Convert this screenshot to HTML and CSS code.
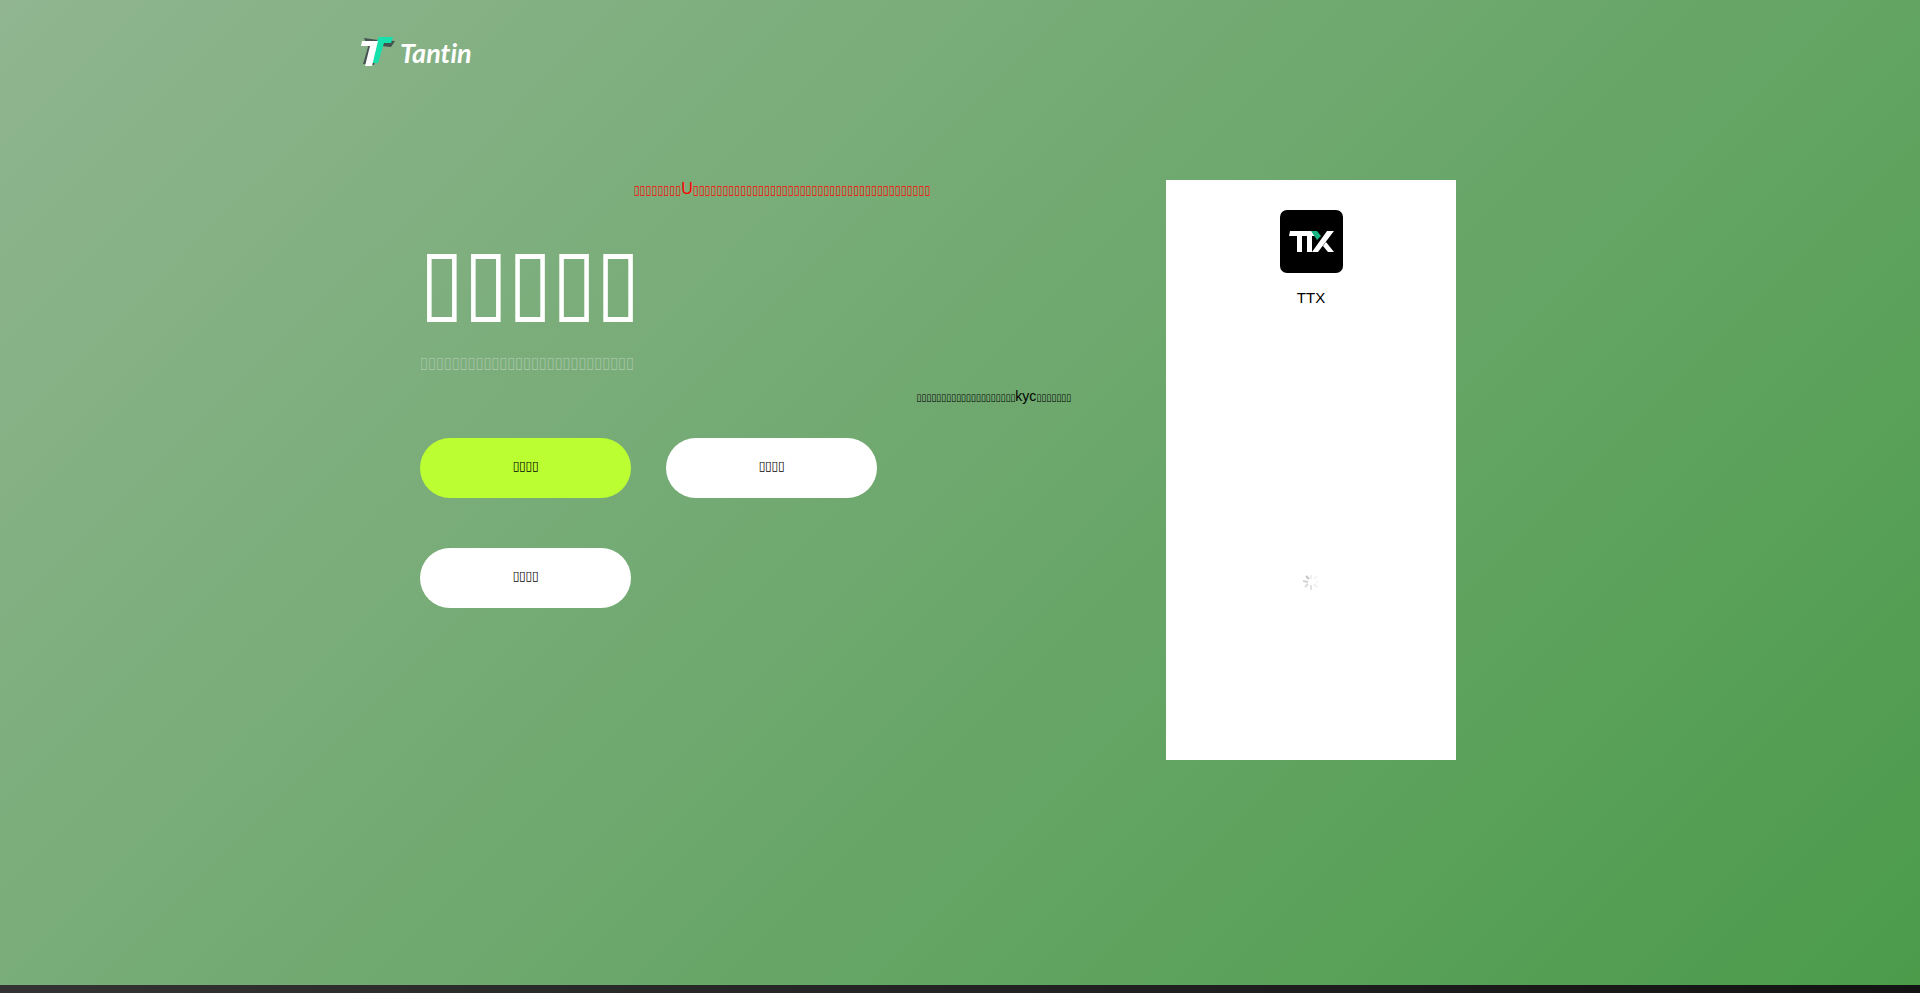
FILE: index.html
```
<!DOCTYPE html>
<html lang="zh-CN">

<head>
    <meta charset="UTF-8">
    <meta name="viewport" content="width=device-width, initial-scale=1.0">
    <title>Tantin</title>
    <link rel="stylesheet" href="styles.css">
</head>

<body>
    <div class="page">
        <header class="header">
            <a class="logo" href="#">
                <svg class="logo-mark" viewBox="0 0 36 32" width="36" height="32" aria-hidden="true">
                    <path fill="#44534f" d="M4 2l14 2 17 1-4 6-10-1-7 19-11-1 5-17z" />
                    <path fill="#16e0ab" d="M19 1h14l-2 6h-7l-6 20h-6l4-20z" />
                    <path fill="#fff" d="M2 5h16l-6 25H5l5-20H1z" />
                </svg>
                <span class="logo-text">Tantin</span>
            </a>
        </header>

        <main class="main">
            <section class="intro">
                <p class="notice">▯▯▯▯▯▯▯▯<span class="latin">U</span>▯▯▯▯▯▯▯▯▯▯▯▯▯▯▯▯▯▯▯▯▯▯▯▯▯▯▯▯▯▯▯▯▯▯▯▯▯▯▯▯</p>
                <h1 class="title">▯▯▯▯▯</h1>
                <p class="subtitle">▯▯▯▯▯▯▯▯▯▯▯▯▯▯▯▯▯▯▯▯▯▯▯▯▯▯▯</p>
                <p class="tip">▯▯▯▯▯▯▯▯▯▯▯▯▯▯▯▯▯▯▯▯<span class="latin">kyc</span>▯▯▯▯▯▯▯</p>
                <div class="buttons">
                    <button class="btn btn-main" type="button">▯▯▯▯</button>
                    <button class="btn" type="button">▯▯▯▯</button>
                    <button class="btn" type="button">▯▯▯▯</button>
                </div>
            </section>

            <section class="phone">
                <svg class="app-icon" viewBox="0 0 63 63" width="63" height="63" aria-hidden="true">
                    <rect width="63" height="63" rx="7" fill="#000" />
                    <path fill="#fff" d="M10 21h22l5 5h-5v16h-5V26h-5v16h-5V26H9z" />
                    <path fill="#16b784" d="M31 21h6l4 5-4 4z" />
                    <path fill="#fff" d="M47 21h7L38 42h-6zM46 32l8 10h-6l-5-6z" />
                </svg>
                <p class="app-name">TTX</p>
                <svg class="loading" viewBox="0 0 20 20" width="20" height="20" stroke-width="2" aria-label="loading">
                    <path stroke="#f0f0f0" d="M10 3V7" />
                    <path stroke="#c4c4c4" d="M5 4l3 3" />
                    <path stroke="#d4d4d4" d="M2 9l5 1" />
                    <path stroke="#dadada" d="M4 15l3-3" />
                    <path stroke="#e2e2e2" d="M10 13v5" />
                    <path stroke="#f0f0f0" d="M13 12l3 3" />
                    <path stroke="#f8f8f8" d="M14 10h4" />
                    <path stroke="#f5f5f5" d="M13 7l3-3" />
                </svg>
            </section>
        </main>
    </div>
    <footer class="footer"></footer>
</body>

</html>
```

FILE: styles.css
```
* {
    box-sizing: border-box;
}

body {
    margin: 0;
    font-family: "DejaVu Sans Condensed", "DejaVu Sans", sans-serif;
    color: #000;
}

p,
h1 {
    margin: 0;
}

.page {
    min-height: calc(100vh - 8px);
    background: linear-gradient(135deg, #90b590, #4b9b4b);
}

.header,
.main {
    max-width: 1200px;
    margin: 0 auto;
}

.header {
    height: 110px;
    padding-top: 35px;
}

.logo {
    display: inline-flex;
    align-items: center;
    gap: 4px;
    color: #fff;
    text-decoration: none;
}

.logo-text {
    padding-top: 2px;
    font-family: Lato, sans-serif;
    font-size: 27px;
    font-weight: bold;
    font-style: italic;
    font-variant-ligatures: none;
    line-height: 32px;
}

.main {
    display: flex;
    align-items: flex-start;
    justify-content: space-between;
    padding: 70px 104px 60px 60px;
}

.intro {
    width: 724px;
}

.latin,
.app-name {
    font-family: "Liberation Sans", Arial, sans-serif;
}

.notice {
    font-size: 12px;
    line-height: 18px;
    color: #f00;
    text-align: center;
}

.notice .latin {
    font-size: 16px;
}

.title {
    margin-top: 20px;
    font-size: 89px;
    font-weight: normal;
    line-height: 122px;
    color: #fff;
}

.subtitle {
    margin-top: 9px;
    font-size: 16px;
    line-height: 26px;
    color: #a5c5a5;
}

.tip {
    margin-top: 12px;
    padding-right: 73px;
    font-size: 10px;
    line-height: 16px;
    text-align: right;
}

.tip .latin {
    font-size: 14px;
}

.buttons {
    display: grid;
    grid-template-columns: repeat(2, 211px);
    gap: 50px 35px;
    margin-top: 32px;
}

.btn {
    height: 60px;
    padding-bottom: 6px;
    border: none;
    border-radius: 30px;
    background: #fff;
    color: #000;
    font-family: inherit;
    font-size: 13px;
    cursor: pointer;
}

.btn-main {
    background: #bbff32;
}

.phone {
    display: flex;
    flex-direction: column;
    align-items: center;
    width: 290px;
    min-height: 580px;
    padding-top: 30px;
    background: #fff;
}

.app-name {
    margin-top: 16px;
    font-size: 15px;
    line-height: 18px;
}

.loading {
    margin-top: 265px;
}

.footer {
    height: 8px;
    background: linear-gradient(90deg, #333, #131313);
}
```
